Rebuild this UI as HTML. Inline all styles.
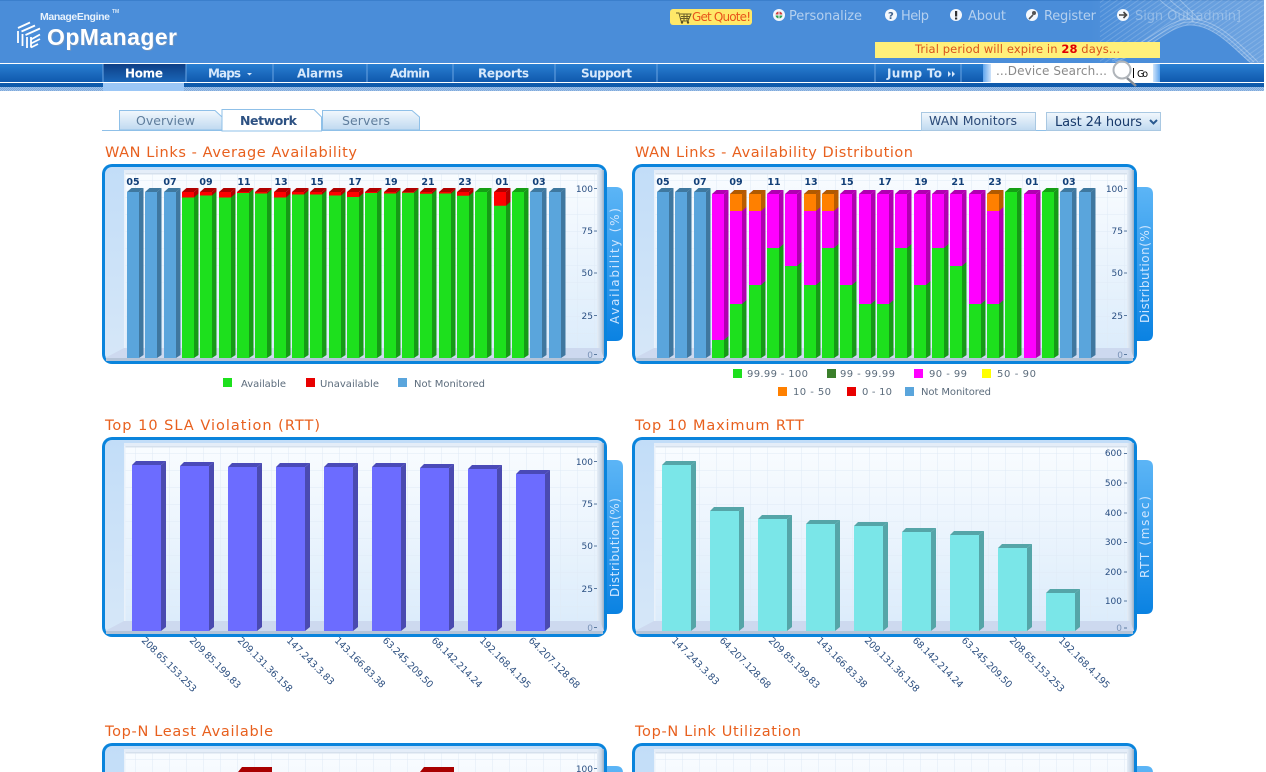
<!DOCTYPE html>
<html><head><meta charset="utf-8"><title>OpManager</title>
<style>
html,body{margin:0;padding:0;background:#fff;overflow:hidden;width:1266px;height:772px}
svg{display:block;font-family:"DejaVu Sans","Liberation Sans",sans-serif}
.t{font-size:14.5px;fill:#e8601e;font-weight:400}
.y{font-size:9px;fill:#2a4f82;text-anchor:end}
.h{font-size:9.5px;font-weight:700;fill:#123f78}
.l{font-size:10px;fill:#5c6c7c}
.ip{font-size:9.5px;fill:#2c4f80}
.n{font-size:12px;font-weight:700;fill:#d6e8fb}
.top{font-size:13px;fill:#b4d0ef}
.side{font-size:12px;fill:#cfe6ff}
</style></head><body>
<svg width="1266" height="772" viewBox="0 0 1266 772" xmlns="http://www.w3.org/2000/svg">
<defs>
<linearGradient id="nav" x1="0" y1="0" x2="0" y2="1"><stop offset="0" stop-color="#2a7fd2"/><stop offset="1" stop-color="#0f58ad"/></linearGradient>
<linearGradient id="home" x1="0" y1="0" x2="0" y2="1"><stop offset="0" stop-color="#0e3f86"/><stop offset="1" stop-color="#1a66b8"/></linearGradient>
<linearGradient id="tab" x1="0" y1="0" x2="0" y2="1"><stop offset="0" stop-color="#f2f8fd"/><stop offset="1" stop-color="#bfd9f0"/></linearGradient>
<linearGradient id="plot" x1="0" y1="0" x2="0" y2="1"><stop offset="0" stop-color="#f9fcff"/><stop offset="1" stop-color="#dcecfb"/></linearGradient>
<linearGradient id="left" x1="0" y1="0" x2="0" y2="1"><stop offset="0" stop-color="#c2ddf8"/><stop offset="1" stop-color="#d6e7f8"/></linearGradient>
<linearGradient id="rb" x1="0" y1="0" x2="1" y2="0"><stop offset="0" stop-color="#e6eef7"/><stop offset=".6" stop-color="#c8d6e6"/><stop offset="1" stop-color="#97aec6"/></linearGradient>
<linearGradient id="st" x1="0" y1="0" x2="0" y2="1"><stop offset="0" stop-color="#5cb5f6"/><stop offset="1" stop-color="#0a82e2"/></linearGradient>
<linearGradient id="se" x1="0" y1="0" x2="1" y2="0"><stop offset="0" stop-color="#5fa5ee"/><stop offset="1" stop-color="#d0e4fa"/></linearGradient>
<linearGradient id="se2" x1="0" y1="0" x2="1" y2="0"><stop offset="0" stop-color="#d0e4fa"/><stop offset="1" stop-color="#5fa5ee"/></linearGradient>
<linearGradient id="sw" x1="0" y1="0" x2="1" y2="0"><stop offset="0" stop-color="#fff" stop-opacity="0"/><stop offset=".5" stop-color="#fff" stop-opacity=".14"/><stop offset="1" stop-color="#fff" stop-opacity=".2"/></linearGradient>
<pattern id="grid" width="17" height="17" patternUnits="userSpaceOnUse"><path d="M17 0V17M0 17H17" stroke="#dfeaf6" stroke-width="1" fill="none"/></pattern>
<pattern id="dith" width="2" height="2" patternUnits="userSpaceOnUse"><rect width="2" height="2" fill="#9fc2ea"/><rect width="1" height="1" fill="#7fa8d8"/><rect x="1" y="1" width="1" height="1" fill="#7fa8d8"/></pattern>
<pattern id="hatch" width="4" height="4" patternUnits="userSpaceOnUse" patternTransform="rotate(-35)"><path d="M0 1H4" stroke="#fff" stroke-opacity=".16" stroke-width="1"/></pattern>
<g id="panel">
<rect x="0" y="0" width="505" height="200" rx="10" fill="#0a84dc"/>
<rect x="3" y="3" width="499" height="194" rx="7" fill="url(#left)"/>
<rect x="22" y="6" width="480" height="4" fill="#e4edf8"/>
<rect x="22" y="9" width="473" height="176" fill="url(#plot)"/>
<rect x="22" y="9" width="473" height="176" fill="url(#grid)"/>
<rect x="22" y="9" width="473" height="1.5" fill="#d5e0ec"/>
<rect x="22" y="9" width="1.5" height="176" fill="#e9f1fa"/>
<rect x="495" y="6" width="7" height="188" fill="url(#rb)"/>
<path d="M3 194L22 184H498L502 194Z" fill="#cdd9ef"/>
<rect x="4" y="194" width="497" height="3" fill="#b4c4d8"/>
</g>
<path id="stab" d="M0 0H9Q16 0 16 7V147Q16 154 9 154H0Z" fill="url(#st)"/>
<g id="B"><path d="M0 192L4.500 188H16.500L12 192Z" fill="#3f789f"/><path d="M12 192L16.500 188V355L12 358Z" fill="#3f779f"/><rect x="0" y="192" width="12" height="166" fill="#5aa5dc"/></g>
<g id="R"><path d="M0 192L4.500 188H16.500L12 192Z" fill="#b00000"/><path d="M12 192L16.500 188V208L12 212Z" fill="#b00000"/><rect x="0" y="192" width="12" height="20" fill="#f00"/></g>
<g id="G"><path d="M0 192L4.500 188H16.500L12 192Z" fill="#149f14"/><path d="M12 192L16.500 188V355L12 358Z" fill="#169a16"/><rect x="0" y="192" width="12" height="166" fill="#1de01d"/></g>
<g id="M"><path d="M0 194L4.500 190H16.500L12 194Z" fill="#b000b0"/><path d="M12 194L16.500 190V355L12 358Z" fill="#b000b0"/><rect x="0" y="194" width="12" height="164" fill="#f0f"/></g>
<g id="O"><path d="M0 194L4.500 190H16.500L12 194Z" fill="#b05a00"/><path d="M12 194L16.500 190V212L12 216Z" fill="#b85c00"/><rect x="0" y="194" width="12" height="20" fill="#ff8000"/></g>
</defs>

<!-- header -->
<rect width="1264" height="63" fill="#4a8dd9"/>
<rect width="1264" height="1" fill="#3b7fcc"/>
<path d="M1090 63L1115 62C1150 50 1170 25 1190 25C1215 25 1235 50 1250 63H1264V0H1090Z" fill="url(#sw)"/>
<path d="M1100 63L1115 62C1150 50 1170 25 1190 25C1215 25 1235 50 1250 63H1264V0H1100Z" fill="url(#hatch)"/>
<g fill="none" stroke="#fff" stroke-opacity=".3" stroke-width="1">
<path d="M1115 62C1150 50 1170 25 1190 25C1215 25 1235 50 1250 62"/>
<path d="M1112 60C1148 48 1168 22 1190 22C1217 22 1238 48 1254 62"/>
<path d="M1108 58C1146 46 1166 19 1190 19C1219 19 1241 46 1258 62"/>
<path d="M1160 0C1170 10 1180 14 1190 19M1170 0C1178 8 1185 12 1195 19M1180 0C1186 6 1192 12 1200 20"/>
</g>
<!-- logo -->
<g fill="none" stroke="#fff" stroke-width="1.800">
<path d="M18 28L30 22.500"/><path d="M21.500 31.500L35 25.500"/><path d="M25.500 35L40 28.500"/>
<path d="M18 31V43M22.500 34V46M27 37V48"/><path d="M31 37V47.500M31 39.500L40 34.500M31 43.500L40 39M31 47.500L38 44"/>
</g>
<text x="40" y="20" font-family="Liberation Sans" font-size="10.500" font-weight="700" fill="#e8f2fc" textLength="70">ManageEngine</text>
<text x="112" y="13" font-family="Liberation Sans" font-size="5" font-weight="700" fill="#d8e8f8">TM</text>
<text x="48" y="46" font-family="Liberation Sans" font-size="23" font-weight="700" fill="#6d93bf" textLength="130">OpManager</text>
<text x="47" y="45" font-family="Liberation Sans" font-size="23" font-weight="700" fill="#fff" textLength="130">OpManager</text>

<!-- top links -->
<rect x="670" y="9" width="82" height="16" rx="3" fill="#ffe868"/>
<g fill="none" stroke="#6a5e28" stroke-width="1"><path d="M676 13H679L681 21H688L691 14H680"/><path d="M681 16.500H690M684 14V21M687 14V21M680 18.500H689"/></g>
<circle cx="682" cy="22.500" r="1.200" fill="#5a5020"/><circle cx="688" cy="22.500" r="1.200" fill="#5a5020"/>
<text x="692" y="21" font-size="12" fill="#e8541a" textLength="59">Get Quote!</text>
<circle cx="779" cy="15" r="6" fill="#f4f8fd"/><path d="M775.500 15a3.500 3.500 0 0 1 7 0z" fill="#d04040"/><path d="M775.500 15a3.500 3.500 0 0 0 7 0z" fill="#30a050"/><path d="M775 15h8M779 11v8" stroke="#f4f8fd" stroke-width="1"/>
<text class="top" x="789" y="20" textLength="73">Personalize</text>
<circle cx="891" cy="15" r="6" fill="#f4f8fd"/><text x="888" y="19" font-size="10" font-weight="700" fill="#44648c">?</text>
<text class="top" x="901" y="20" textLength="28">Help</text>
<circle cx="956" cy="15" r="6" fill="#f4f8fd"/><path d="M955 11h2.200v5.500h-2.200zM955 17.500h2.200v2h-2.200z" fill="#333"/>
<text class="top" x="968" y="20" textLength="38">About</text>
<circle cx="1032" cy="15" r="6" fill="#f4f8fd"/><path d="M1029 19L1033 15" stroke="#555" stroke-width="1.600"/><circle cx="1034" cy="13" r="2" fill="#555"/>
<text class="top" x="1044" y="20" textLength="52">Register</text>
<circle cx="1123" cy="15" r="6" fill="#f4f8fd"/><path d="M1119 15H1126M1123.500 12L1126.500 15L1123.500 18" stroke="#444" stroke-width="1.600" fill="none"/>
<text class="top" x="1135" y="20" textLength="106" fill-opacity=".6">Sign Out[admin]</text>

<rect x="875" y="42" width="285" height="16" fill="#fff07a"/>
<text x="915" y="53" font-size="11.500" fill="#d8541c" textLength="205" xml:space="preserve">Trial period will expire in <tspan font-weight="700" fill="#e00000">28</tspan> days...</text>

<!-- nav -->
<rect y="63" width="1264" height="1.500" fill="#fff"/>
<rect y="64" width="1264" height="18" fill="url(#nav)"/>
<rect y="82" width="1264" height="1.500" fill="#fff"/>
<rect y="83" width="1264" height="4" fill="#0f5aab"/>
<rect y="87" width="1264" height="4" fill="url(#dith)"/>
<rect x="103" y="64" width="83" height="18" fill="url(#home)"/>
<rect x="103" y="83" width="81" height="8" fill="#9cc7f6"/>
<path d="M103 64V82M186 64V82M273 64V82M367 64V82M453 64V82M555 64V82M657 64V82M875 64V82M961 64V82" stroke="#6aa4e2" stroke-width="1"/>
<text class="n" style="fill:#fff" x="125" y="77.500" textLength="38">Home</text>
<text class="n" x="208" y="77.500" textLength="33">Maps</text><path d="M247 73h5l-2.500 2.500z" fill="#d6e8fb"/>
<text class="n" x="297" y="77.500" textLength="46">Alarms</text>
<text class="n" x="390" y="77.500" textLength="40">Admin</text>
<text class="n" x="478" y="77.500" textLength="51">Reports</text>
<text class="n" x="581" y="77.500" textLength="51">Support</text>
<text class="n" x="887" y="77.500" textLength="55">Jump To</text>
<path d="M948 71l3 3-3 3zM952 71l3 3-3 3z" fill="#d6e8fb"/>
<rect x="983" y="64" width="8" height="18" fill="url(#se)"/><rect x="991" y="64" width="162" height="18" fill="#fff"/><rect x="1153" y="64" width="7" height="18" fill="url(#se2)"/>
<text x="996" y="75" font-size="12" fill="#8a8a8a" textLength="111">...Device Search...</text>
<path d="M1127 78L1136 86" stroke="#8a8f96" stroke-width="2.500"/>
<circle cx="1122" cy="70" r="8.500" fill="#fff" fill-opacity=".6" stroke="#b0b5ba" stroke-width="2"/>
<path d="M1133.500 68V78" stroke="#000"/><text x="1137" y="77" font-size="9.500" fill="#000" textLength="11">Go</text>

<!-- tabs -->
<path d="M102 130.500H1161" stroke="#8fc0e8"/>
<path d="M119.500 130V110.500H215L222 117V130Z" fill="url(#tab)" stroke="#8fc0e8"/>
<path d="M322.500 130V110.500H412L419.500 117V130Z" fill="url(#tab)" stroke="#8fc0e8"/>
<path d="M222 131V109.500H314L321.500 117V131Z" fill="#fff" stroke="#8fc0e8"/>
<text x="136" y="125" font-size="12.500" fill="#5f7d9c" textLength="59">Overview</text>
<text x="240" y="125" font-size="12.500" font-weight="700" fill="#2d5182" textLength="57">Network</text>
<text x="342" y="125" font-size="12.500" fill="#5f7d9c" textLength="48">Servers</text>
<rect x="921.500" y="112.500" width="114" height="18" fill="url(#tab)" stroke="#a9c8e2"/>
<text x="929" y="125" font-size="12.500" fill="#2b4a78" textLength="88">WAN Monitors</text>
<rect x="1046.500" y="112.500" width="114" height="18" fill="url(#tab)" stroke="#a9c8e2"/>
<text x="1055" y="126" font-size="13" fill="#17396a" textLength="87">Last 24 hours</text>
<path d="M1150 120L1153.500 123.500L1157 120" fill="none" stroke="#2b5a90" stroke-width="2"/>

<!-- titles -->
<text class="t" x="105" y="157" textLength="252">WAN Links - Average Availability</text>
<text class="t" x="635" y="157" textLength="278">WAN Links - Availability Distribution</text>
<text class="t" x="105" y="430" textLength="215">Top 10 SLA Violation (RTT)</text>
<text class="t" x="635" y="430" textLength="169">Top 10 Maximum RTT</text>
<text class="t" x="105" y="736" textLength="168">Top-N Least Available</text>
<text class="t" x="635" y="736" textLength="166">Top-N Link Utilization</text>

<!-- panels -->
<use href="#stab" x="607" y="187"/><use href="#stab" x="1137" y="187"/><use href="#stab" x="607" y="460"/><use href="#stab" x="1137" y="460"/>
<use href="#panel" x="102" y="164"/><use href="#panel" x="632" y="164"/><use href="#panel" x="102" y="437"/><use href="#panel" x="632" y="437"/>
<text class="side" transform="translate(619 324) rotate(-90)" textLength="116">Availability (%)</text>
<text class="side" transform="translate(1149 323) rotate(-90)" textLength="98">Distribution(%)</text>
<text class="side" transform="translate(619 597) rotate(-90)" textLength="99">Distribution(%)</text>
<text class="side" transform="translate(1149 578) rotate(-90)" textLength="82">RTT (msec)</text>

<!-- chart 1 -->
<use href="#B" x="127"/><use href="#B" x="145"/><use href="#B" x="164"/>
<use href="#R" x="182"/><use href="#R" x="200"/><use href="#R" x="219"/><use href="#R" x="237"/><use href="#R" x="255"/><use href="#R" x="274"/><use href="#R" x="292"/><use href="#R" x="310"/><use href="#R" x="329"/><use href="#R" x="347"/><use href="#R" x="365"/><use href="#R" x="384"/><use href="#R" x="402"/><use href="#R" x="420"/><use href="#R" x="439"/><use href="#R" x="457"/><use href="#R" x="494"/>
<use href="#G" x="475"/><use href="#G" x="512"/><use href="#B" x="530"/><use href="#B" x="549"/>
<path fill="#169a16" d="M194 197.500l4.500-4V355l-4.500 3zM212 195.500l4.500-4V355l-4.500 3zM231 197.500l4.500-4V355l-4.500 3zM249 193l4.500-4V355l-4.500 3zM267 193.500l4.500-4V355l-4.500 3zM286 197.500l4.500-4V355l-4.500 3zM304 194.500l4.500-4V355l-4.500 3zM322 194.500l4.500-4V355l-4.500 3zM341 195.500l4.500-4V355l-4.500 3zM359 197l4.500-4V355l-4.500 3zM377 193l4.500-4V355l-4.500 3zM396 193.500l4.500-4V355l-4.500 3zM414 192.700l4.500-4V355l-4.500 3zM432 193.700l4.500-4V355l-4.500 3zM451 193.500l4.500-4V355l-4.500 3zM469 195.700l4.500-4V355l-4.500 3zM506 205.700l4.500-4V355l-4.500 3z"/>
<path fill="#1de01d" d="M182 197.500h12V358h-12zM200 195.500h12V358h-12zM219 197.500h12V358h-12zM237 193h12V358h-12zM255 193.500h12V358h-12zM274 197.500h12V358h-12zM292 194.500h12V358h-12zM310 194.500h12V358h-12zM329 195.500h12V358h-12zM347 197h12V358h-12zM365 193h12V358h-12zM384 193.500h12V358h-12zM402 192.700h12V358h-12zM420 193.700h12V358h-12zM439 193.500h12V358h-12zM457 195.700h12V358h-12zM494 205.700h12V358h-12z"/>
<g class="h" text-anchor="middle"><text x="133" y="185">05</text><text x="170" y="185">07</text><text x="206" y="185">09</text><text x="244" y="185">11</text><text x="281" y="185">13</text><text x="317" y="185">15</text><text x="355" y="185">17</text><text x="391" y="185">19</text><text x="428" y="185">21</text><text x="465" y="185">23</text><text x="502" y="185">01</text><text x="539" y="185">03</text></g>
<g class="y"><text x="593" y="192">100</text><text x="593" y="234">75</text><text x="593" y="276">50</text><text x="593" y="319">25</text><text x="593" y="358" fill-opacity=".5">0</text></g>
<path d="M594 188.500h3M594 231h3M594 273h3M594 315.500h3M594 354.500h3" stroke="#5a7aa0"/>
<rect x="223" y="378" width="9" height="9" fill="#1de01d"/><text class="l" x="241" y="387" textLength="45">Available</text>
<rect x="306" y="378" width="9" height="9" fill="#e80000"/><text class="l" x="320" y="387" textLength="59">Unavailable</text>
<rect x="398" y="378" width="9" height="9" fill="#5aa5dc"/><text class="l" x="414" y="387" textLength="71">Not Monitored</text>

<!-- chart 2 -->
<use href="#B" x="657"/><use href="#B" x="675"/><use href="#B" x="694"/>
<use href="#M" x="712"/><use href="#M" x="730"/><use href="#M" x="749"/><use href="#M" x="767"/><use href="#M" x="785"/><use href="#M" x="804"/><use href="#M" x="822"/><use href="#M" x="840"/><use href="#M" x="859"/><use href="#M" x="877"/><use href="#M" x="895"/><use href="#M" x="914"/><use href="#M" x="932"/><use href="#M" x="950"/><use href="#M" x="969"/><use href="#M" x="987"/>
<use href="#O" x="730"/><use href="#O" x="749"/><use href="#O" x="804"/><use href="#O" x="822"/><use href="#O" x="987"/>
<path fill="#b000b0" d="M742 211l4.500-4v20l-4.500 4zM761 211l4.500-4v20l-4.500 4zM816 211l4.500-4v20l-4.500 4zM834 211l4.500-4v20l-4.500 4zM999 211l4.500-4v20l-4.500 4z"/>
<path fill="#f0f" d="M730 211h12v20h-12zM749 211h12v20h-12zM804 211h12v20h-12zM822 211h12v20h-12zM987 211h12v20h-12z"/>
<use href="#G" x="1005"/><use href="#M" x="1024"/><use href="#G" x="1042"/><use href="#B" x="1060"/><use href="#B" x="1079"/>
<path fill="#169a16" d="M724 340l4.500-4V355l-4.500 3zM742 304l4.500-4V355l-4.500 3zM761 285l4.500-4V355l-4.500 3zM779 248l4.500-4V355l-4.500 3zM797 266l4.500-4V355l-4.500 3zM816 285l4.500-4V355l-4.500 3zM834 248l4.500-4V355l-4.500 3zM852 285l4.500-4V355l-4.500 3zM871 304l4.500-4V355l-4.500 3zM889 304l4.500-4V355l-4.500 3zM907 248l4.500-4V355l-4.500 3zM926 285l4.500-4V355l-4.500 3zM944 248l4.500-4V355l-4.500 3zM962 266l4.500-4V355l-4.500 3zM981 304l4.500-4V355l-4.500 3zM999 304l4.500-4V355l-4.500 3z"/>
<path fill="#1de01d" d="M712 340h12V358h-12zM730 304h12V358h-12zM749 285h12V358h-12zM767 248h12V358h-12zM785 266h12V358h-12zM804 285h12V358h-12zM822 248h12V358h-12zM840 285h12V358h-12zM859 304h12V358h-12zM877 304h12V358h-12zM895 248h12V358h-12zM914 285h12V358h-12zM932 248h12V358h-12zM950 266h12V358h-12zM969 304h12V358h-12zM987 304h12V358h-12z"/>
<g class="h" text-anchor="middle"><text x="663" y="185">05</text><text x="700" y="185">07</text><text x="736" y="185">09</text><text x="774" y="185">11</text><text x="811" y="185">13</text><text x="847" y="185">15</text><text x="885" y="185">17</text><text x="921" y="185">19</text><text x="958" y="185">21</text><text x="995" y="185">23</text><text x="1032" y="185">01</text><text x="1069" y="185">03</text></g>
<g class="y"><text x="1123" y="192">100</text><text x="1123" y="234">75</text><text x="1123" y="276">50</text><text x="1123" y="319">25</text><text x="1123" y="358" fill-opacity=".5">0</text></g>
<path d="M1124 188.500h3M1124 231h3M1124 273h3M1124 315.500h3M1124 354.500h3" stroke="#5a7aa0"/>
<rect x="733" y="369" width="9" height="9" fill="#1de01d"/><text class="l" x="747" y="377" textLength="61">99.99 - 100</text>
<rect x="827" y="369" width="9" height="9" fill="#3b7f2b"/><text class="l" x="840" y="377" textLength="55">99 - 99.99</text>
<rect x="914" y="369" width="9" height="9" fill="#f0f"/><text class="l" x="929" y="377" textLength="38">90 - 99</text>
<rect x="982" y="369" width="9" height="9" fill="#ff0"/><text class="l" x="997" y="377" textLength="39">50 - 90</text>
<rect x="778" y="387" width="9" height="9" fill="#ff8000"/><text class="l" x="793" y="395" textLength="38">10 - 50</text>
<rect x="847" y="387" width="9" height="9" fill="#e80000"/><text class="l" x="862" y="395" textLength="30">0 - 10</text>
<rect x="905" y="387" width="9" height="9" fill="#5aa5dc"/><text class="l" x="921" y="395" textLength="70">Not Monitored</text>

<!-- chart 3 -->
<path fill="#4a4ab8" d="M132 465l4-4h30l-5 4zM180 466l4-4h30l-5 4zM228 467l4-4h30l-5 4zM276 467l4-4h30l-5 4zM324 467l4-4h30l-5 4zM372 467l4-4h30l-5 4zM420 468l4-4h30l-5 4zM468 469l4-4h30l-5 4zM516 474l4-4h30l-5 4z"/>
<path fill="#4a4ab0" d="M161 465l5-4V627l-5 4zM209 466l5-4V627l-5 4zM257 467l5-4V627l-5 4zM305 467l5-4V627l-5 4zM353 467l5-4V627l-5 4zM401 467l5-4V627l-5 4zM449 468l5-4V627l-5 4zM497 469l5-4V627l-5 4zM545 474l5-4V627l-5 4z"/>
<path fill="#6c6cff" d="M132 465h29V631h-29zM180 466h29V631h-29zM228 467h29V631h-29zM276 467h29V631h-29zM324 467h29V631h-29zM372 467h29V631h-29zM420 468h29V631h-29zM468 469h29V631h-29zM516 474h29V631h-29z"/>
<g class="y"><text x="593" y="465">100</text><text x="593" y="507">75</text><text x="593" y="549">50</text><text x="593" y="592">25</text><text x="593" y="631" fill-opacity=".5">0</text></g>
<path d="M594 461.500h3M594 504h3M594 546h3M594 588.500h3M594 627.500h3" stroke="#5a7aa0"/>
<g class="ip">
<text transform="translate(141 641) rotate(45)" textLength="73">208.65.153.253</text>
<text transform="translate(189 641) rotate(45)" textLength="68">209.85.199.83</text>
<text transform="translate(237 641) rotate(45)" textLength="73">209.131.36.158</text>
<text transform="translate(286 641) rotate(45)" textLength="63">147.243.3.83</text>
<text transform="translate(334 641) rotate(45)" textLength="67">143.166.83.38</text>
<text transform="translate(382 641) rotate(45)" textLength="67">63.245.209.50</text>
<text transform="translate(431 641) rotate(45)" textLength="67">68.142.214.24</text>
<text transform="translate(479 641) rotate(45)" textLength="68">192.168.4.195</text>
<text transform="translate(528 641) rotate(45)" textLength="68">64.207.128.68</text>
</g>

<!-- chart 4 -->
<path fill="#55a5a8" d="M662 465l4-4h30l-5 4zM710 511l4-4h30l-5 4zM758 519l4-4h30l-5 4zM806 524l4-4h30l-5 4zM854 526l4-4h30l-5 4zM902 532l4-4h30l-5 4zM950 535l4-4h30l-5 4zM998 548l4-4h30l-5 4zM1046 593l4-4h30l-5 4z"/>
<path fill="#55a5a8" d="M691 465l5-4V627l-5 4zM739 511l5-4V627l-5 4zM787 519l5-4V627l-5 4zM835 524l5-4V627l-5 4zM883 526l5-4V627l-5 4zM931 532l5-4V627l-5 4zM979 535l5-4V627l-5 4zM1027 548l5-4V627l-5 4zM1075 593l5-4V627l-5 4z"/>
<path fill="#7ae6e8" d="M662 465h29V631h-29zM710 511h29V631h-29zM758 519h29V631h-29zM806 524h29V631h-29zM854 526h29V631h-29zM902 532h29V631h-29zM950 535h29V631h-29zM998 548h29V631h-29zM1046 593h29V631h-29z"/>
<g class="y"><text x="1122" y="456">600</text><text x="1122" y="486">500</text><text x="1122" y="516">400</text><text x="1122" y="545">300</text><text x="1122" y="575">200</text><text x="1122" y="604">100</text><text x="1122" y="631" fill-opacity=".5">0</text></g>
<path d="M1124 453.500h3M1124 483h3M1124 513h3M1124 542.500h3M1124 572h3M1124 601h3M1124 628h3" stroke="#5a7aa0"/>
<g class="ip">
<text transform="translate(671 641) rotate(45)" textLength="63">147.243.3.83</text>
<text transform="translate(719 641) rotate(45)" textLength="68">64.207.128.68</text>
<text transform="translate(768 641) rotate(45)" textLength="68">209.85.199.83</text>
<text transform="translate(816 641) rotate(45)" textLength="67">143.166.83.38</text>
<text transform="translate(864 641) rotate(45)" textLength="73">209.131.36.158</text>
<text transform="translate(912 641) rotate(45)" textLength="67">68.142.214.24</text>
<text transform="translate(961 641) rotate(45)" textLength="67">63.245.209.50</text>
<text transform="translate(1009 641) rotate(45)" textLength="73">208.65.153.253</text>
<text transform="translate(1058 641) rotate(45)" textLength="68">192.168.4.195</text>
</g>

<!-- charts 5/6 top, clipped at frame bottom -->
<svg x="0" y="740" width="1266" height="32" viewBox="0 740 1266 32">
<use href="#stab" x="607" y="766"/><use href="#stab" x="1137" y="766"/>
<use href="#panel" x="102" y="743"/><use href="#panel" x="632" y="743"/>
<path fill="#a80000" d="M238 772l4-5h30v5zM420 772l4-5h30v5z"/>
<text class="y" x="593" y="772">100</text><path d="M594 768.500h3" stroke="#5a7aa0"/>
</svg>
</svg>
</body></html>
